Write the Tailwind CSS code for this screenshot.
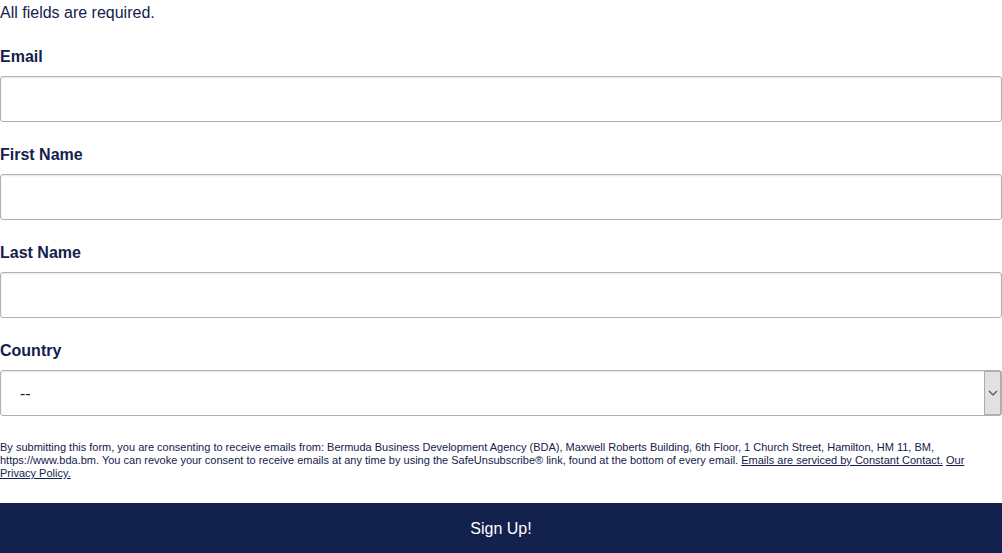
<!DOCTYPE html>
<html lang="en">
<head>
<meta charset="utf-8">
<meta name="viewport" content="width=device-width, initial-scale=1">
<title>Sign Up</title>
<script src="https://cdn.jsdelivr.net/npm/@tailwindcss/browser@4"></script>
</head>
<body class="bg-white font-['Liberation_Sans',Arial,sans-serif] text-base leading-6 text-[#13214d]">
<form class="pt-px">
  <p class="mb-5">All fields are required.</p>
  <div class="mb-[21px]">
    <label for="email" class="mb-[7px] block font-bold">Email</label>
    <input id="email" type="email" required class="block h-[46px] w-full rounded-[3px] border border-[#aeb0ba] bg-white px-5 shadow-[inset_0_1px_2px_rgba(0,0,0,0.1)]">
  </div>
  <div class="mb-[21px]">
    <label for="first" class="mb-[7px] block font-bold">First Name</label>
    <input id="first" type="text" required class="block h-[46px] w-full rounded-[3px] border border-[#aeb0ba] bg-white px-5 shadow-[inset_0_1px_2px_rgba(0,0,0,0.1)]">
  </div>
  <div class="mb-[21px]">
    <label for="last" class="mb-[7px] block font-bold">Last Name</label>
    <input id="last" type="text" required class="block h-[46px] w-full rounded-[3px] border border-[#aeb0ba] bg-white px-5 shadow-[inset_0_1px_2px_rgba(0,0,0,0.1)]">
  </div>
  <div class="mb-[25px]">
    <label for="country" class="mb-[7px] block font-bold">Country</label>
    <div class="relative">
      <select id="country" required class="block h-[46px] w-full appearance-none rounded-[3px] border border-[#aeb0ba] bg-white px-[19px] pt-0.5 text-[#222222] shadow-[inset_0_1px_2px_rgba(0,0,0,0.1)]">
        <option value="">--</option>
      </select>
      <span class="pointer-events-none absolute inset-y-px right-px flex w-[17px] items-center justify-center border border-[#adadad] bg-[#e1e1e1]">
        <svg class="h-2 w-3" viewBox="0 0 12 8" fill="none" stroke="#505050" stroke-width="1.2" aria-hidden="true"><path d="M2 2l4 4 4-4"/></svg>
      </span>
    </div>
  </div>
  <p class="mb-[23px] text-[11px] leading-[13px]">By submitting this form, you are consenting to receive emails from: Bermuda Business Development Agency (BDA), Maxwell Roberts Building, 6th Floor, 1 Church Street, Hamilton, HM 11, BM, https://www.bda.bm. You can revoke your consent to receive emails at any time by using the SafeUnsubscribe® link, found at the bottom of every email. <a href="#" class="underline">Emails are serviced by Constant Contact.</a> <a href="#" class="underline">Our Privacy Policy.</a></p>
  <button type="submit" class="block h-[50px] w-full bg-[#13214d] pt-0.5 text-center text-white">Sign Up!</button>
</form>
</body>
</html>
